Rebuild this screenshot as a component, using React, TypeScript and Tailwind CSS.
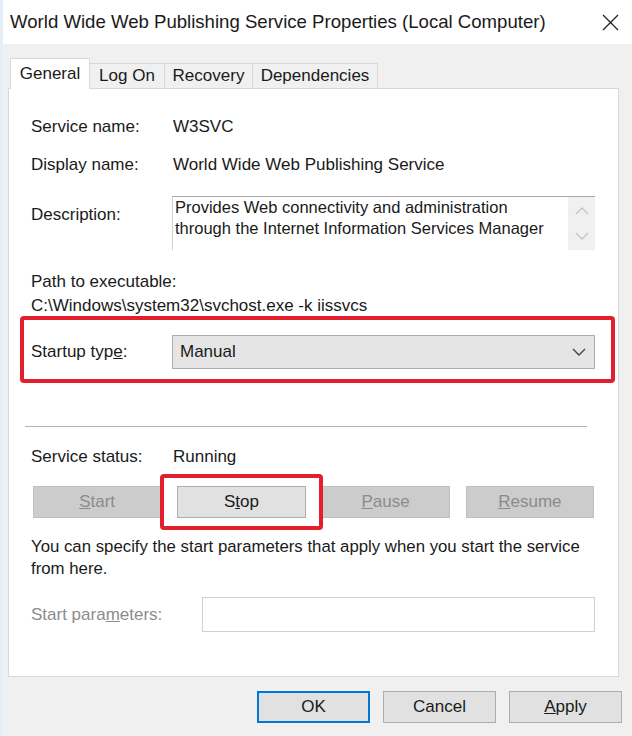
import React from 'react';

const font = { fontFamily: '"Liberation Sans", Arial, sans-serif' };

function Chevron({ dir, className }: { dir: 'up' | 'down'; className?: string }) {
  return (
    <svg width="14" height="8" viewBox="0 0 14 8" className={className}>
      <polyline
        points={dir === 'down' ? '1,1 7,7 13,1' : '1,7 7,1 13,7'}
        fill="none"
        stroke="currentColor"
        strokeWidth="1.4"
      />
    </svg>
  );
}

function Row({ label, value }: { label: string; value: string }) {
  return (
    <div className="flex h-6 items-center">
      <div className="w-[142px] shrink-0">{label}</div>
      <div>{value}</div>
    </div>
  );
}

function SvcButton({ children, disabled }: { children: React.ReactNode; disabled?: boolean }) {
  return (
    <div
      className={
        disabled
          ? 'flex h-8 items-center justify-center border border-[#bfbfbf] bg-[#cccccc] text-[#8b8b8b]'
          : 'flex h-8 items-center justify-center border border-[#adadad] bg-[#e1e1e1] text-[#1a1a1a]'
      }
    >
      {children}
    </div>
  );
}

export default function App() {
  return (
    <div
      className="flex h-[736px] w-[632px] flex-col overflow-hidden border-l-[3px] border-[#e6eef6] bg-[#f0f0f0] text-[17px] text-[#1a1a1a]"
      style={font}
    >
      {/* title bar */}
      <div className="flex h-[44px] shrink-0 items-center justify-between bg-white pl-[7px] pr-[13px]">
        <span className="text-[18.6px] text-[#1a1a1a]">
          World Wide Web Publishing Service Properties (Local Computer)
        </span>
        <svg width="17" height="17" viewBox="0 0 17 17">
          <path d="M1 1 L16 16 M16 1 L1 16" stroke="#222" strokeWidth="1.3" />
        </svg>
      </div>

      {/* tabs */}
      <div className="mt-[14px] flex h-[30px] items-end pl-[7px]">
        <div className="relative z-10 -mb-px flex h-[31px] w-[80px] items-center justify-center border border-b-0 border-[#d9d9d9] bg-white">
          General
        </div>
        <div className="flex h-[25px] w-[75px] items-center justify-center border border-l-0 border-b-0 border-[#d9d9d9]">
          Log On
        </div>
        <div className="flex h-[25px] w-[88px] items-center justify-center border border-l-0 border-b-0 border-[#d9d9d9]">
          Recovery
        </div>
        <div className="flex h-[25px] w-[125px] items-center justify-center border border-l-0 border-b-0 border-[#d9d9d9]">
          Dependencies
        </div>
      </div>

      {/* panel */}
      <div className="ml-[5px] w-[611px] border border-[#d9d9d9] bg-white pb-[44px] pl-[22px] pr-[23px] pt-[26px]">
        <Row label="Service name:" value="W3SVC" />
        <div className="mt-[14px]">
          <Row label="Display name:" value="World Wide Web Publishing Service" />
        </div>

        <div className="mt-[19px] flex">
          <div className="w-[141px] shrink-0 pt-[6px]">Description:</div>
          <div className="flex h-[54px] flex-1 border-l border-t border-[#a8a8a8] border-l-[#d0d0d0]">
            <div className="flex-1 pl-[2px] text-[16.5px] leading-[21px]">
              Provides Web connectivity and administration
              <br />
              through the Internet Information Services Manager
            </div>
            <div className="flex w-[27px] flex-col items-center justify-around bg-[#f0f0f0] py-[2px] text-[#c4c4c4]">
              <Chevron dir="up" />
              <Chevron dir="down" />
            </div>
          </div>
        </div>

        <div className="mt-[20px] flex h-6 items-center">Path to executable:</div>
        <div className="flex h-[23px] items-center">C:\Windows\system32\svchost.exe -k iissvcs</div>

        <div className="relative mt-[18px] flex items-center">
          <div className="pointer-events-none absolute -bottom-[14px] -left-[11px] -right-[20px] -top-[19px] rounded-[4px] border-4 border-[#e41f2d]" />
          <div className="w-[141px] shrink-0">
            Startup typ<span className="underline">e</span>:
          </div>
          <div className="flex h-[34px] flex-1 items-center justify-between border border-[#adadad] bg-[#e5e5e5] pl-[7px] pr-[8px]">
            <span>Manual</span>
            <Chevron dir="down" className="text-[#444]" />
          </div>
        </div>

        <div className="ml-[-6px] mt-[57px] h-[2px] w-[562px] border-b border-t border-b-white border-t-[#b4b4b4] bg-[#d8d8d8]" />

        <div className="mt-[17px]">
          <Row label="Service status:" value="Running" />
        </div>

        <div className="ml-[2px] mt-[17px] grid w-[561px] grid-cols-4 gap-x-[16px]">
          <SvcButton disabled>
            <span>
              <span className="underline">S</span>tart
            </span>
          </SvcButton>
          <div className="relative">
            <div className="pointer-events-none absolute -bottom-[12px] -left-[17px] -right-[17px] -top-[12px] rounded-[4px] border-4 border-[#e41f2d]" />
            <SvcButton>
              <span>
                S<span className="underline">t</span>op
              </span>
            </SvcButton>
          </div>
          <SvcButton disabled>
            <span>
              <span className="underline">P</span>ause
            </span>
          </SvcButton>
          <SvcButton disabled>
            <span>
              <span className="underline">R</span>esume
            </span>
          </SvcButton>
        </div>

        <div className="mt-[18px] text-[16.8px] leading-[22px]">
          You can specify the start parameters that apply when you start the service
          <br />
          from here.
        </div>

        <div className="mt-[17px] flex items-center">
          <div className="w-[171px] shrink-0 text-[#8c8c8c]">
            Start para<span className="underline">m</span>eters:
          </div>
          <div className="h-[35px] flex-1 border border-[#d0d0d0] bg-white" />
        </div>
      </div>

      {/* dialog buttons */}
      <div className="mt-[14px] flex justify-end gap-[13px] pr-[10px]">
        <div className="flex h-[32px] w-[113px] items-center justify-center border-2 border-[#0078d7] bg-[#e1e1e1]">
          OK
        </div>
        <div className="flex h-[32px] w-[113px] items-center justify-center border border-[#adadad] bg-[#e1e1e1]">
          Cancel
        </div>
        <div className="flex h-[32px] w-[113px] items-center justify-center border border-[#adadad] bg-[#e1e1e1]">
          <span>
            <span className="underline">A</span>pply
          </span>
        </div>
      </div>
    </div>
  );
}
